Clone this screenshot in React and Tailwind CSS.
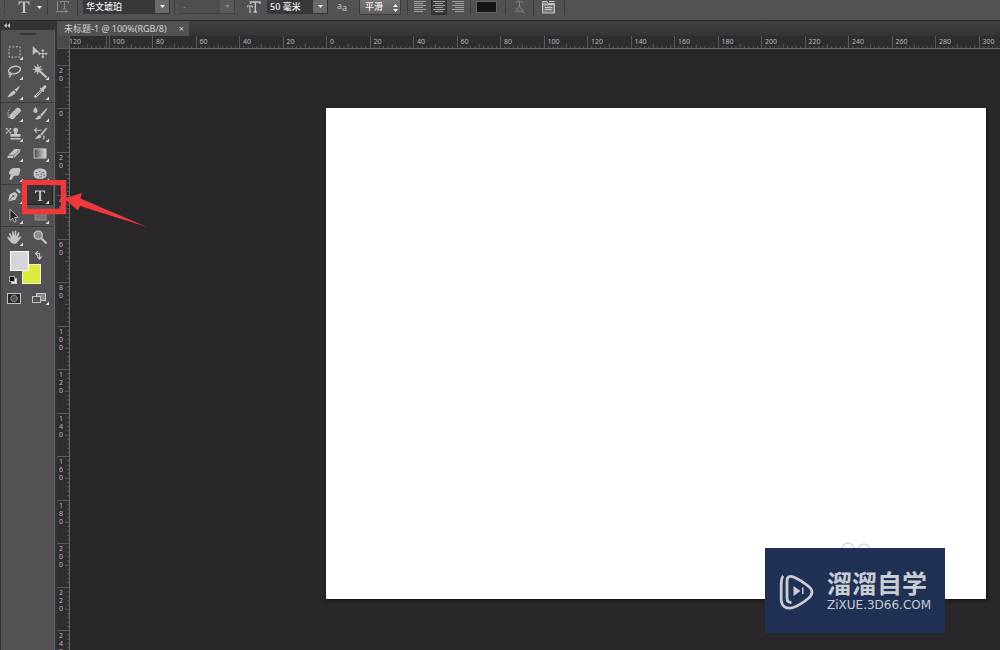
import React, { useState } from "react";

const ICON = "#c4c2c4";
const PX_PER_UNIT = 2.175; // ruler scale at 100%

// Tool glyphs, all on an 18x18 grid
const glyphs = {
  marquee: (
    <rect x="3.5" y="4" width="12" height="11" fill="none" stroke={ICON} strokeDasharray="2.2 1.6" />
  ),
  move: (
    <g fill={ICON}>
      <path d="M1 3v10l3-2.800 4.600-.2z" />
      <path d="M12 6.300l2 2.200h-1.400v2.400h2.400V9.500l2.300 2-2.300 2v-1.400h-2.400v2.400H14l-2 2.200-2-2.200h1.400v-2.400H9v1.400l-2.300-2 2.300-2v1.400h2.400V8.500H10z" />
    </g>
  ),
  lasso: (
    <g fill="none" stroke={ICON} strokeWidth="1.500">
      <ellipse cx="9.500" cy="7.500" rx="6.600" ry="4" transform="rotate(-12 9.500 7.500)" />
      <path d="M5 10.200c-2 .2-2 2.600 0 2.300 1.600-.3 1-2-.4-2M4.800 12.500c.6 1.400 0 2.300-1.400 2.500" />
    </g>
  ),
  wand: (
    <g stroke={ICON} strokeWidth="1.100">
      <path d="M8.500 8.500l7.500 7" strokeWidth="2.400" />
      <path d="M6.500 1v11M1 6.500h11M2.800 2.800l7.400 7.400M10.200 2.800l-7.400 7.400" />
      <circle cx="6.500" cy="6.500" r="2.400" fill={ICON} />
    </g>
  ),
  slice: (
    <g fill={ICON}>
      <path d="M1.500 15.500c2-3.500 4.500-6 7-7.500l2.500 2.500c-2.500 2.600-5.500 4.500-9.500 5z" />
      <path d="M9.500 6.900L16 2.500l-4.400 6.800z" />
    </g>
  ),
  dropper: (
    <g>
      <path d="M11 7.500l-6.800 6.800L3 15.500" stroke={ICON} strokeWidth="2.800" fill="none" />
      <path d="M10.300 8.200l-5.500 5.500" stroke="#535153" strokeWidth="1" />
      <path d="M8.500 5.800l1.200-1.200 1 .8 2.300-2.600c1.800-1.700 4 .4 2.400 2.200l-2.500 2.400.8 1-1.200 1.200z" fill={ICON} />
    </g>
  ),
  heal: (
    <g>
      <rect x="2.500" y="6" width="15" height="6" rx="3" fill={ICON} transform="rotate(-45 10 9)" />
      <path d="M8.500 8l3.500 3.500M10.500 6l3.500 3.500" stroke="#777577" strokeDasharray="1 1" />
      <path d="M3.500 14C1.500 10 2 5 6 3" fill="none" stroke={ICON} strokeDasharray="1.500 1" />
    </g>
  ),
  brush: (
    <g fill={ICON}>
      <path d="M4 2c1.500 2 2.300 3 2.300 4.200a2.300 2.300 0 01-4.600 0C1.700 5 2.500 4 4 2z" />
      <path d="M17 4.200L11 12.300 9 10.600l7-7.400z" />
      <path d="M8.400 11l2.200 1.900c-.8 2.400-4 3.400-8 2.200 2.800-.2 3.400-3.700 5.800-4.100z" />
    </g>
  ),
  stamp: (
    <g fill={ICON}>
      <path d="M8.600 3.500c1.600-1.400 4.800-.6 4.800 1.700 0 1.500-1.300 1.700-1.100 4.300H16v3H5v-3h4.200c.3-2.600-1.200-2.800-1.200-4.300 0-.7.200-1.300.6-1.700zM5 14h11v1.500H5z" />
      <path d="M0 3h2v2H0zM4 3h2v2H4zM2 5h2v2H2zM0 7h2v2H0zM4 7h2v2H4z" />
    </g>
  ),
  history: (
    <g fill={ICON}>
      <path d="M16.800 3.500L11 11.200 9.200 9.800l6.600-7.300z" />
      <path d="M8.600 10.200l2 1.900c-.8 2.400-4 3.200-8 2.400 2.800-.6 3.600-3.900 6-4.300z" />
      <path d="M3 5.500h7.500M5.500 3L3 5.500 5.500 8M12.500 11.500c1.500 1 1.500 2.500-.5 3.500" fill="none" stroke={ICON} strokeWidth="1.200" />
    </g>
  ),
  eraser: (
    <g>
      <path d="M2 11.500L9.500 4h6.800l-1 3.500L9 14H2z" fill={ICON} />
      <path d="M2 11h6.800l7-6.500M8.800 11L8.500 14" fill="none" stroke="#6b696b" />
    </g>
  ),
  gradient: (
    <g>
      <defs>
        <linearGradient id="fade">
          <stop stopColor="#4b494b" />
          <stop offset="1" stopColor="#dcdcdc" />
        </linearGradient>
      </defs>
      <rect x="2.500" y="4" width="13" height="10" fill="url(#fade)" stroke={ICON} />
    </g>
  ),
  smudge: (
    <path
      d="M3.500 9.500C3 6 6 3 9.500 3H14c1.500 0 2.200 1.300 1.700 2.500l-1 4c-.4 1.700-1.700 2-3.200 2H9l-2.700 4c-.8 1-2.500.3-2.200-.9L5.500 10.500z"
      fill={ICON}
    />
  ),
  sponge: (
    <g>
      <path d="M2 8c0-3 3.500-4.500 7-4.500s7 1.500 7 4.500v3c0 2.500-3.500 4-7 4s-7-1.500-7-4z" fill={ICON} />
      <path d="M4 8h2m1.500-1h2m1.500 1h2.500M4.500 10.500h3m2-.5h2m1 1h2M8 12.500h3" stroke="#6b696b" />
    </g>
  ),
  pen: (
    <g>
      <path d="M2.500 15.500L4.200 8 9.800 5l3.200 3.200-2.600 5.500z" fill={ICON} />
      <path d="M11 3.300L12.700 1.500 16.500 5.300 14.700 7z" fill={ICON} />
      <path d="M2.800 15.200l5-5.500" stroke="#535153" />
      <circle cx="8.300" cy="9.500" r="1.100" fill="#535153" />
    </g>
  ),
  type: (
    <path
      d="M3.500 3.500h11v3.200h-.9c-.3-1.600-.8-2.100-2.200-2.100h-1.300v8.600c0 1 .4 1.200 1.500 1.300v.6H6.400v-.6c1.100-.1 1.500-.3 1.500-1.300V4.600H6.600C5.200 4.600 4.700 5.100 4.400 6.700h-.9z"
      fill={ICON}
    />
  ),
  select: (
    <path d="M4.500 2v12.500l3-2.500 1.900 4.200 2-.9L9.500 11.300l3.900-.3z" fill="#252325" stroke={ICON} strokeWidth="1" />
  ),
  shape: <rect x="3.500" y="5" width="12" height="9" fill="#777577" stroke="#929092" />,
  hand: (
    <path
      d="M5.600 10.200L3.500 5.200c-.3-1.300 1.100-1.600 1.600-.5L7.200 8 6.700 3c0-1.300 1.600-1.300 1.700 0l.8 4.500.6-5.200c.1-1.200 1.700-1.100 1.700.1L11.300 8l1.900-4.200c.4-1.100 1.900-.7 1.600.5L13.300 9.500l2-1.400c1.100-.7 2 .4 1.200 1.300l-3.700 4.500c-1 1.500-1.800 2-3.500 2-2.100 0-3.300-.8-4.400-2.400L1.700 9.700c-.6-1 .6-1.900 1.500-1z"
      fill={ICON}
    />
  ),
  zoom: (
    <g>
      <circle cx="7" cy="6.500" r="4.400" fill="#8d8b8d" stroke={ICON} strokeWidth="1.600" />
      <path d="M10.300 9.800l5.700 5.700" stroke={ICON} strokeWidth="2.400" />
    </g>
  ),
};

// Grouped as they are divided in the panel
const toolGroups = [
  [
    ["marquee", "矩形选框", true],
    ["move", "移动", false],
    ["lasso", "套索", true],
    ["wand", "魔棒", true],
    ["slice", "切片", true],
    ["dropper", "吸管", true],
  ],
  [
    ["heal", "修复画笔", true],
    ["brush", "画笔", true],
    ["stamp", "仿制图章", true],
    ["history", "历史记录画笔", true],
    ["eraser", "橡皮擦", true],
    ["gradient", "渐变", true],
    ["smudge", "涂抹", true],
    ["sponge", "海绵", true],
  ],
  [
    ["pen", "钢笔", true],
    ["type", "横排文字", true],
    ["select", "路径选择", true],
    ["shape", "矩形", true],
  ],
  [
    ["hand", "抓手", true],
    ["zoom", "缩放", false],
  ],
];

function ToolButton({ name, label, more, active, onClick }) {
  return (
    <button
      type="button"
      aria-label={label}
      aria-pressed={active}
      onClick={onClick}
      className={
        active
          ? "flex h-5 items-center justify-center border border-[#272527] bg-[#363436]"
          : "flex h-5 items-center justify-center"
      }
    >
      <svg viewBox="0 0 18 18" className="h-[18px] w-[18px] shrink-0 overflow-visible">
        <g transform="translate(.8 1.2) scale(.92)">{glyphs[name]}</g>
        {more && <path d="M18 14.500V18h-3.500z" fill="#dddbdd" />}
      </svg>
    </button>
  );
}

function ToolPanel() {
  const [tool, setTool] = useState("type");

  return (
    <aside className="flex w-[55px] shrink-0 flex-col bg-[#353335]">
      <button type="button" aria-label="折叠面板" className="flex h-[9px] shrink-0 items-center pl-1">
        <svg viewBox="0 0 6 5" className="h-[5px] w-[6px]" fill="#c9c7c9">
          <path d="M2.800 0v5L0 2.500zM6 0v5L3.200 2.500z" />
        </svg>
      </button>
      <div className="ml-px flex-1 border-r border-[#646264] bg-[#535153] pt-[3px]">
        <div className="mx-auto mb-[6px] h-[2px] w-4 bg-[#353335]" />
        <div className="divide-y divide-[#3d3b3d]">
          {toolGroups.map((group, i) => (
            <div key={i} className="grid grid-cols-2 pb-px pr-px">
              {group.map(([name, label, more]) => (
                <ToolButton
                  key={name}
                  name={name}
                  label={label}
                  more={more}
                  active={tool === name}
                  onClick={() => setTool(name)}
                />
              ))}
            </div>
          ))}
        </div>

        {/* 前景色 / 背景色 */}
        <div className="relative mt-[3px] h-[37px]">
          <button
            type="button"
            aria-label="背景色"
            className="absolute left-[21px] top-[13px] h-5 w-[19px] border border-[#eef0d0] bg-[#d9ec3b]"
          />
          <button
            type="button"
            aria-label="前景色"
            className="absolute left-[9px] top-0 h-5 w-[19px] border border-white bg-[#d3d5d9]"
          />
          <svg viewBox="0 0 54 37" className="pointer-events-none h-[37px] w-[54px]">
            <path d="M34.500 2.500h4V7M37 0l-2.500 2.500L37 5M36.300 5.500L38.500 8l2.200-2.500" fill="none" stroke={ICON} strokeWidth="1.200" />
            <rect x="10.500" y="27.500" width="5" height="5" fill="#eee" stroke={ICON} />
            <rect x="8.500" y="25.500" width="5" height="5" fill="#151315" stroke="#a5a3a5" />
          </svg>
        </div>

        <div className="grid grid-cols-2 pr-px">
          <button type="button" aria-label="快速蒙版" className="flex h-5 items-center justify-center">
            <svg viewBox="0 0 14 11" className="h-[11px] w-[14px]">
              <rect x=".5" y=".5" width="13" height="10" fill="#2b292b" stroke={ICON} />
              <circle cx="7" cy="5.500" r="3.200" fill="#535153" stroke={ICON} strokeDasharray="1.200 .8" />
            </svg>
          </button>
          <button type="button" aria-label="屏幕模式" className="flex h-5 items-center justify-center">
            <svg viewBox="0 0 18 14" className="h-[14px] w-[18px]">
              <rect x="5.500" y="2.500" width="9" height="7" fill="#8a888a" stroke={ICON} />
              <rect x="1.500" y="5.500" width="8" height="6" fill="#535153" stroke={ICON} />
              <path d="M18 10.500V14h-3.500z" fill="#dddbdd" />
            </svg>
          </button>
        </div>
      </div>
    </aside>
  );
}

function Divider() {
  return <div className="h-[15px] w-px shrink-0 bg-[#3d3b3d]" />;
}

function DropArrow({ label, dim }) {
  return (
    <button
      type="button"
      aria-label={label}
      className={
        dim
          ? "flex h-[14px] w-[15px] items-center justify-center border-b border-r border-[#434143] bg-[#5b595b]"
          : "flex h-[14px] w-[15px] items-center justify-center border-b border-r border-[#343234] bg-[#6b696b]"
      }
    >
      <svg viewBox="0 0 5 3" className="h-[3px] w-[5px]" fill={dim ? "#8b898b" : "#eeeeee"}>
        <path d="M0 0h5L2.500 3z" />
      </svg>
    </button>
  );
}

const alignments = [
  ["左对齐文本", "M0 1.500h12M0 3.500h9M0 5.500h12M0 7.500h9M0 9.500h12M0 11.500h9"],
  ["居中对齐文本", "M0 1.500h12M2 3.500h8M0 5.500h12M2 7.500h8M0 9.500h12M2 11.500h8"],
  ["右对齐文本", "M0 1.500h12M3 3.500h9M0 5.500h12M3 7.500h9M0 9.500h12M3 11.500h9"],
];

function OptionsBar() {
  const [font, setFont] = useState("华文琥珀");
  const [size, setSize] = useState("50 毫米");
  const [align, setAlign] = useState(1);

  return (
    <header className="flex h-[21px] shrink-0 items-start overflow-hidden border-b border-[#2b292b] bg-[#535153] text-[9px] leading-[14px] text-[#eeeeee]">
      <div className="ml-1 mr-3 h-[14px] w-0 border-l border-dotted border-[#3d3b3d]" />
      <button type="button" aria-label="当前工具" className="mr-[5px] flex h-[14px] w-[25px] items-center justify-between">
        <svg viewBox="2 2 14 14" className="h-[14px] w-[14px]">{glyphs.type}</svg>
        <svg viewBox="0 0 5 3" className="h-[3px] w-[5px]" fill="#eeeeee">
          <path d="M0 0h5L2.500 3z" />
        </svg>
      </button>
      <Divider />
      <button type="button" aria-label="切换文本方向" className="mx-2 flex h-[14px] w-[13px] items-center">
        <svg viewBox="0 0 13 14" className="h-[14px] w-[13px]" fill="none" stroke="#8b898b">
          <path d="M4.500 3.500v-2h8v2M8.500 1.500v7M7 9h3M1.500 1v9" />
          <path d="M0 11.500h11M9.500 10l2 1.500-2 1.500" />
        </svg>
      </button>
      <Divider />
      <div className="ml-[5px] mr-1 flex">
        <input
          aria-label="字体"
          value={font}
          onChange={(e) => setFont(e.target.value)}
          className="h-[14px] w-[72px] bg-[#393739] pl-[3px] font-medium outline-none"
        />
        <DropArrow label="选择字体" />
      </div>
      <Divider />
      <div className="ml-1 mr-3 flex">
        <input
          aria-label="字体样式"
          value="-"
          readOnly
          className="h-[14px] w-[41px] border-b border-[#434143] bg-[#4f4d4f] pl-1 text-[#8b898b] outline-none"
        />
        <DropArrow label="选择样式" dim />
      </div>
      <svg viewBox="0 0 14 14" className="mr-[6px] h-[14px] w-[14px] shrink-0" fill="none" stroke={ICON}>
        <path d="M3.500 4V2h9.500v2M8.300 2v10M6.500 12h3.600" strokeWidth="1.500" />
        <path d="M0 7.500V6h5.500v1.500M3 6v6M2 12h2" />
      </svg>
      <div className="mr-[9px] flex">
        <input
          aria-label="字体大小"
          value={size}
          onChange={(e) => setSize(e.target.value)}
          className="h-[14px] w-[46px] bg-[#393739] pl-[3px] font-medium outline-none"
        />
        <DropArrow label="选择字体大小" />
      </div>
      <label htmlFor="aa" className="mr-[9px] flex w-[13px] shrink-0 items-start leading-[12px] text-[#c4c2c4]">
        <span>a</span>
        <span className="pt-[2px]">a</span>
      </label>
      <div className="relative mr-[6px]">
        <select
          id="aa"
          aria-label="消除锯齿"
          defaultValue="平滑"
          className="block h-[15px] w-[42px] appearance-none border border-t-0 border-[#3d3b3d] bg-linear-to-b from-[#777577] to-[#605e60] pl-[5px] font-medium leading-[14px]"
        >
          <option>平滑</option>
          <option>锐利</option>
          <option>无</option>
        </select>
        <svg viewBox="0 0 5 8" className="pointer-events-none absolute right-[3px] top-1 h-2 w-[5px]" fill="#eeeeee">
          <path d="M0 3h5L2.500 0zM0 5h5L2.500 8z" />
        </svg>
      </div>
      <Divider />
      <div className="ml-1 mr-1 flex gap-[3px]">
        {alignments.map(([label, d], i) => (
          <button
            key={label}
            type="button"
            aria-label={label}
            aria-pressed={align === i}
            onClick={() => setAlign(i)}
            className={
              align === i
                ? "flex h-[15px] w-4 justify-center border border-t-0 border-[#2f2d2f] bg-[#3d3b3d]"
                : "flex h-[15px] w-4 justify-center"
            }
          >
            <svg viewBox="0 0 12 13" className="h-[13px] w-3" stroke="#a09ea0">
              <path d={d} />
            </svg>
          </button>
        ))}
      </div>
      <Divider />
      <button
        type="button"
        aria-label="文本颜色"
        className="ml-[5px] mr-2 mt-px h-3 w-[21px] shrink-0 border border-[#656365] bg-[#171517]"
      />
      <Divider />
      <button type="button" aria-label="创建文字变形" className="mx-[7px] h-[14px] w-[13px]">
        <svg viewBox="0 0 13 14" className="h-[14px] w-[13px]" fill="none" stroke="#8b898b">
          <path d="M2.500 3c2-2.500 6-2.500 8 0M6.500 1.500V7M6.500 5.500c-1 3-2 4-4 4.500M6.500 5.500c1 3 2 4 4 4.500M1.500 12.500c3-2 7-2 10 0" />
        </svg>
      </button>
      <Divider />
      <button type="button" aria-label="切换字符和段落面板" className="ml-2 mr-[9px] h-[14px] w-[13px]">
        <svg viewBox="0 0 13 14" className="h-[14px] w-[13px]">
          <path d="M.5 1.500h4.500l1 2h6.500v9.500H.5z" fill="#7d7b7d" stroke={ICON} />
          <path d="M7 1.500h5.500M1 4.500h11M3 7.500h7M3 9.500h7" stroke={ICON} />
        </svg>
      </button>
      <Divider />
    </header>
  );
}

const major = 20 * PX_PER_UNIT;
const range = (from, to) => Array.from({ length: (to - from) / 20 + 1 }, (_, i) => from + i * 20);

function HorizontalRuler() {
  return (
    <div className="relative h-[13px] flex-1 overflow-hidden border-b border-[#6b696b] bg-[#2f2d2f]">
      {/* origin lies 256px into the ruler */}
      <div className="flex" style={{ marginLeft: 256 - 6 * major }}>
        {range(-120, 300).map((n) => (
          <div key={n} className="relative h-3 shrink-0 pl-1" style={{ width: major }}>
            <svg viewBox="0 0 43.500 12" className="absolute left-0 top-0 h-3 w-full" stroke="#5b595b">
              <path d="M.5 0v12M22.250 8v4" />
              <path
                d="M4.850 10v2M9.200 10v2M13.550 10v2M17.900 10v2M26.600 10v2M30.950 10v2M35.300 10v2M39.650 10v2"
              />
            </svg>
            <span className="block text-[7px] leading-[11px]">{Math.abs(n)}</span>
          </div>
        ))}
      </div>
      <div className="absolute left-9 top-0 h-3 w-px bg-[#5b595b]" />
    </div>
  );
}

function VerticalRuler() {
  return (
    <div className="w-[13px] shrink-0 overflow-hidden border-r border-[#6b696b] bg-[#2f2d2f]">
      {/* origin lies 59px down the ruler */}
      <div style={{ marginTop: 59 - 2 * major }}>
        {range(-40, 240).map((n, i) => (
          <div key={n} className="relative w-3 pl-[2px] pt-[2px]" style={{ height: major }}>
            <svg viewBox="0 0 12 43.500" className="absolute left-0 top-0 h-full w-3" stroke="#5b595b">
              <path d="M0 .5h12M8 22.250h4" />
              <path
                d="M10 4.850h2M10 9.200h2M10 13.550h2M10 17.900h2M10 26.600h2M10 30.950h2M10 35.300h2M10 39.650h2"
              />
            </svg>
            {i > 0 && <span className="block w-1 break-all text-[7px] leading-[8px]">{Math.abs(n)}</span>}
          </div>
        ))}
      </div>
    </div>
  );
}

function Watermark() {
  return (
    <div className="absolute bottom-[17px] right-[55px]">
      <svg viewBox="0 0 32 8" className="absolute -top-[6px] left-[75px] h-2 w-8" fill="none" stroke="#dcdcdc" strokeWidth="1.500">
        <circle cx="8" cy="7" r="6" />
        <circle cx="24" cy="8" r="6" />
      </svg>
      <div className="relative flex h-[85px] w-[180px] items-center bg-[#213055] pl-[14px] text-[#c9ccd2]">
        <svg viewBox="0 0 36 38" className="mr-3 h-[38px] w-9 shrink-0" fill="none" stroke="#c9ccd2" strokeWidth="2.800">
          <path d="M4.300 4C2.300 5.500 2.200 9 2.200 14v13c0 7.500 5 10.500 12 8.500 5-1.600 10-5 15-9 5-4.200 5-8.500 0-12.500-4-3.300-9-6.500-14.500-9C11 3.500 8 4.500 8 9v17c0 3.500 1.500 4.500 4.500 4.500" />
          <path d="M14.500 14l7 5-7 5z" fill="#c9ccd2" stroke="none" />
          <path d="M23.800 15.500v6.500" strokeWidth="1.500" />
        </svg>
        <div className="whitespace-nowrap">
          <p className="mb-1 text-[25px] font-bold leading-6">溜溜自学</p>
          <p className="font-['DejaVu_Sans',sans-serif] text-[12px] leading-[12px]">ZiXUE.3D66.COM</p>
        </div>
      </div>
    </div>
  );
}

export default function App() {
  return (
    <div className="relative flex h-screen flex-col overflow-hidden bg-[#353335] font-['Noto_Sans','Noto_Sans_CJK_SC',sans-serif] text-[#b9b7b9]">
      <OptionsBar />
      <div className="flex min-h-0 flex-1">
        <ToolPanel />
        <main className="ml-[2px] flex min-w-0 flex-1 flex-col">
          {/* 文档标签 */}
          <div className="flex h-[15px] shrink-0 bg-linear-to-b from-[#434143] to-[#353335]">
            <div className="flex items-center gap-3 bg-[#535153] pl-[7px] pr-[5px] text-[9px] leading-[14px] text-[#d3d1d3]">
              <span>未标题-1 @ 100%(RGB/8)</span>
              <button type="button" aria-label="关闭" className="leading-[14px]">
                ×
              </button>
            </div>
          </div>
          <div className="flex shrink-0">
            <div className="h-[13px] w-[13px] border-b border-r border-[#5b595b] bg-[#4b494b]" />
            <HorizontalRuler />
          </div>
          <div className="flex min-h-0 flex-1">
            <VerticalRuler />
            <div className="flex flex-1 bg-[#292729] pb-[51px] pl-64 pr-[14px] pt-[59px]">
              <div className="flex-1 bg-white shadow-[1px_1px_3px_#111111]" />
            </div>
          </div>
        </main>
      </div>

      {/* 文字工具标注 */}
      <svg viewBox="0 0 126 48" className="pointer-events-none absolute left-[22px] top-[180px] h-12 w-[126px]">
        <rect x="2.500" y="2.500" width="39" height="29" fill="none" stroke="#ee3a3c" strokeWidth="5.500" />
        <path d="M42 18.500L60 13l-1.500 5.500L125 47 58 26l-2 4.500z" fill="#ee3a3c" />
      </svg>
      <Watermark />
    </div>
  );
}
